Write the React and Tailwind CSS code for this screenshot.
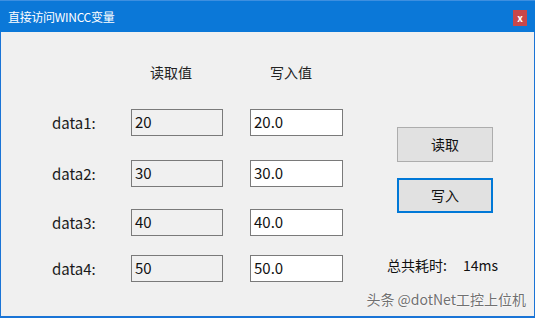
import React from "react"

const FONT = {fontFamily: '"Noto Sans CJK SC", "Noto Sans", sans-serif'}

const rows = [
    {label: 'data1:', read: '20', write: '20.0', mt: 'mt-[27px]'},
    {label: 'data2:', read: '30', write: '30.0', mt: 'mt-[24px]'},
    {label: 'data3:', read: '40', write: '40.0', mt: 'mt-[22px]'},
    {label: 'data4:', read: '50', write: '50.0', mt: 'mt-[19px]'},
]

const DataRow = ({label, read, write, mt}) => (
    <div className={`flex items-center h-[27px] ${mt}`}>
        <div className="w-[79px] text-[15px] text-[#1a1a1a] pt-[2px]">{label}</div>
        <div className="w-[92px] h-[27px] border border-[#7a7a7a] bg-[#f0f0f0] flex items-center pl-[3px] text-[15px] text-[#111]">
            {read}
        </div>
        <div className="w-[27px]"/>
        <div className="w-[93px] h-[27px] border border-[#7a7a7a] bg-white flex items-center pl-[3px] text-[15px] text-[#111]">
            {write}
        </div>
    </div>
)

export default function App() {
    return (
        <div className="w-[535px] h-[318px] flex flex-col bg-[#1a74d6]" style={FONT}>
            {/* title bar */}
            <div className="h-[32px] bg-[#0b78d8] border-t border-[#3d8fe0] flex items-center justify-between pl-[8px] pr-[8px]">
                <span className="text-white text-[12px] leading-none tracking-[-0.3px]">直接访问WINCC变量</span>
                <div className="w-[14px] h-[16px] bg-[#c8474a] flex items-center justify-center text-white text-[10px] leading-none font-bold mt-[2px]">
                    x
                </div>
            </div>

            {/* body */}
            <div className="relative flex-1 mx-[1px] mb-[2px] bg-[#f0f0f0] flex">
                <div className="pl-[51px] pt-[30px] flex flex-col">
                    <div className="flex h-[20px] items-center text-[14px] text-[#222]">
                        <div className="w-[98px]"/>
                        <div className="w-[120px]">读取值</div>
                        <div>写入值</div>
                    </div>
                    {rows.map(r => <DataRow key={r.label} {...r}/>)}
                </div>

                <div className="ml-[54px] pt-[95px] flex flex-col">
                    <button className="w-[96px] h-[35px] bg-[#e1e1e1] border border-[#adadad] text-[14px] text-[#111]">
                        读取
                    </button>
                    <button className="mt-[16px] w-[96px] h-[35px] bg-[#e1e1e1] border-2 border-[#0078d7] text-[14px] text-[#111]">
                        写入
                    </button>
                    <div className="mt-[42px] -ml-[10px] flex text-[14px] text-[#111]">
                        <span>总共耗时:</span>
                        <span className="ml-[16px]">14ms</span>
                    </div>
                </div>

                {/* watermark */}
                <div className="absolute right-[8px] bottom-[6px] text-[14px] text-[#707070] [text-shadow:0_0_2px_#fff,0_0_1px_#fff]">
                    头条 @dotNet工控上位机
                </div>
            </div>
        </div>
    )
}
